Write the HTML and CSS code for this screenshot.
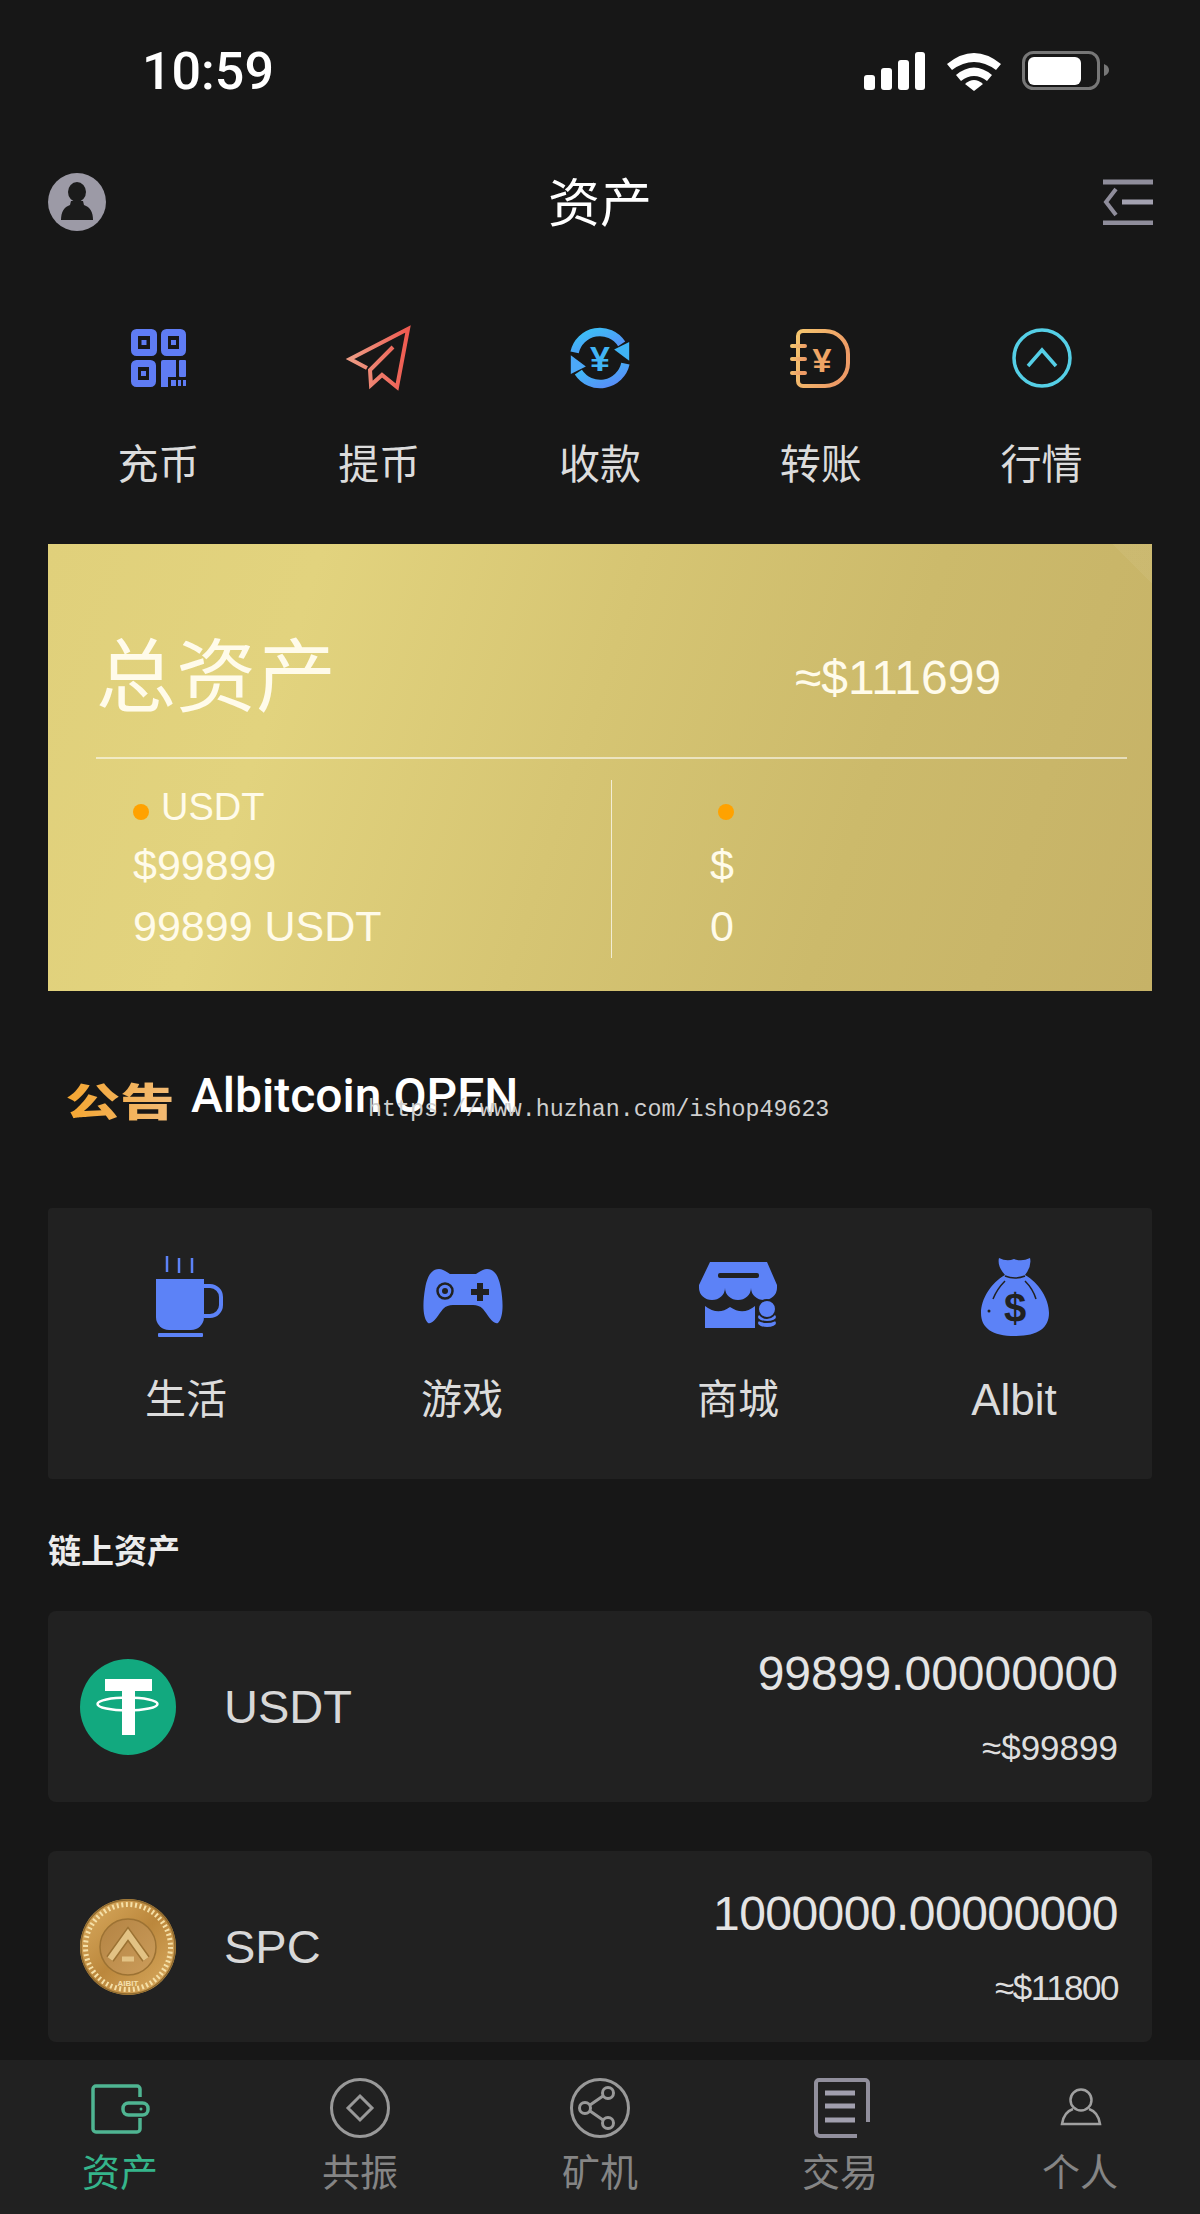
FILE: index.html
```html
<!DOCTYPE html>
<html lang="zh-CN">
<head>
  <meta charset="UTF-8" />
  <meta name="viewport" content="width=device-width, initial-scale=1" />
  <title>资产</title>
  <link rel="stylesheet" href="styles.css">
</head>
<body>

  <main class="page">
    <div class="status">
      <span class="status-time">10:59</span>
      <svg class="status-icons" width="245" height="40" viewBox="0 0 245 40">
        <rect x="0" y="24" width="11" height="15" rx="3" fill="#fff"/>
        <rect x="17" y="17" width="11" height="22" rx="3" fill="#fff"/>
        <rect x="34" y="9" width="11" height="30" rx="3" fill="#fff"/>
        <rect x="51" y="1" width="10" height="38" rx="3" fill="#fff"/>
        <path d="M83 13 Q110 -9 137 13 L132 19 Q110 3 88 19Z" fill="#fff"/>
        <path d="M92 24 Q110 9 128 24 L123 30 Q110 20 97 30Z" fill="#fff"/>
        <path d="M101 33 Q110 25 119 33 L110 40Z" fill="#fff"/>
        <rect x="159.500" y="1.500" width="75" height="36" rx="10" fill="none" stroke="#777" stroke-width="3"/>
        <rect x="164" y="6" width="53" height="28" rx="6" fill="#fff"/>
        <path d="M240 13 q5 2 5 6 q0 4 -5 6z" fill="#777"/>
      </svg>
    </div>

    <header class="nav">
      <svg width="58" height="58" viewBox="0 0 58 58">
        <defs><clipPath id="avatarClip"><circle cx="29" cy="29" r="29"/></clipPath></defs>
        <circle cx="29" cy="29" r="29" fill="#9c9aa6"/>
        <g clip-path="url(#avatarClip)" fill="#1b1b1b">
          <ellipse cx="29" cy="19" rx="9" ry="10"/>
          <path d="M23 28h12l1 4c6 2 9 7 9 15H13c0-8 3-13 9-15z"/>
        </g>
      </svg>
      <h1 class="nav-title">资产</h1>
      <svg class="nav-menu" width="50" height="46" viewBox="0 0 50 46">
        <path d="M0 3h50M0 44h50" stroke="#8f8d9b" stroke-width="5"/>
        <path d="M19 23h31" stroke="#a3a1b0" stroke-width="5"/>
        <path d="M13 10 3 23l10 13" fill="none" stroke="#8f8d9b" stroke-width="4"/>
      </svg>
    </header>

    <section class="actions">
      <div class="action">
        <svg width="64" height="64" viewBox="0 0 64 64">
          <g fill="none" stroke="#5f7cf4" stroke-width="7">
            <rect x="8.500" y="6.500" width="19" height="20" rx="2"/>
            <rect x="38.500" y="6.500" width="18" height="20" rx="2"/>
            <rect x="8.500" y="37.500" width="18" height="20" rx="2"/>
          </g>
          <g fill="#5f7cf4">
            <rect x="15.500" y="14" width="5" height="5"/>
            <rect x="45" y="14" width="5" height="5"/>
            <rect x="15" y="45" width="5" height="5"/>
            <path d="M35 36a2 2 0 0 1 2-2h13v17h-8v10h-7z"/>
            <rect x="53" y="34" width="7" height="17" rx="1"/>
            <rect x="45" y="54" width="5" height="6"/>
            <rect x="52" y="54" width="3" height="6"/>
            <rect x="57" y="54" width="3" height="6"/>
          </g>
        </svg>
        <span>充币</span>
      </div>
      <div class="action">
        <svg width="64" height="64" viewBox="0 0 64 64">
          <defs>
            <linearGradient id="planeGrad" x1="0" y1="0" x2="1" y2="0">
              <stop offset="0" stop-color="#ee9c85"/>
              <stop offset="1" stop-color="#ef5a50"/>
            </linearGradient>
          </defs>
          <path d="M46 21 23 44l1 15 11-10 15 12L61 3 3 33l17 9" fill="none" stroke="url(#planeGrad)" stroke-width="4"/>
        </svg>
        <span>提币</span>
      </div>
      <div class="action">
        <svg width="64" height="68" viewBox="0 0 64 68">
          <defs>
            <linearGradient id="cycleGrad" x1="0" y1="0" x2="1" y2="1">
              <stop offset="0" stop-color="#39c4f6"/>
              <stop offset="1" stop-color="#5b88f8"/>
            </linearGradient>
          </defs>
          <g fill="none" stroke="url(#cycleGrad)" stroke-width="9">
            <path d="M5 28A27.500 27.500 0 0 1 55 19"/>
            <path d="M59 40A27.500 27.500 0 0 1 9 49"/>
          </g>
          <path d="M47 25 63 17 63 37Z" fill="#3fb4f6"/>
          <path d="M17 43 1 51 1 31Z" fill="#4ca8f7"/>
          <text class="icon-yen" x="32" y="48" fill="#41b4f5" font-size="38">¥</text>
        </svg>
        <span>收款</span>
      </div>
      <div class="action">
        <svg width="64" height="64" viewBox="0 0 64 64">
          <defs>
            <linearGradient id="noteGrad" x1="0" y1="0" x2="1" y2="0.4">
              <stop offset="0" stop-color="#f4c56e"/>
              <stop offset="1" stop-color="#ee9b66"/>
            </linearGradient>
          </defs>
          <g fill="none" stroke="url(#noteGrad)" stroke-width="4" stroke-linecap="round">
            <path d="M9 15v-5a5 5 0 0 1 5-5h22a23 23 0 0 1 23 23v9a23 23 0 0 1-23 23H14a5 5 0 0 1-5-5z"/>
            <path d="M3 20h13M3 33h13M3 47h13"/>
          </g>
          <text class="icon-yen" x="33" y="46" fill="#f0a566" font-size="34">¥</text>
        </svg>
        <span>转账</span>
      </div>
      <div class="action">
        <svg width="64" height="64" viewBox="0 0 64 64">
          <circle cx="32" cy="32" r="28" fill="none" stroke="#55cfe6" stroke-width="3.500"/>
          <path d="M18 40 32 24l14 16" fill="none" stroke="#55cfe6" stroke-width="3.500"/>
        </svg>
        <span>行情</span>
      </div>
    </section>

    <section class="gold-card">
      <div class="gold-head">
        <div class="gold-title">总资产</div>
        <div class="gold-amount">≈$111699</div>
      </div>
      <div class="gold-cols">
        <div class="gold-col gold-col-left">
          <div class="gold-name"><i class="dot"></i>USDT</div>
          <div>$99899</div>
          <div>99899 USDT</div>
        </div>
        <div class="gold-col gold-col-right">
          <div class="gold-name"><i class="dot dot-solo"></i></div>
          <div>$</div>
          <div>0</div>
        </div>
      </div>
    </section>

    <section class="notice">
      <span class="notice-tag">公告</span>
      <span class="notice-text">Albitcoin OPEN</span>
      <span class="watermark">https://www.huzhan.com/ishop49623</span>
    </section>

    <section class="shortcuts">
      <div class="shortcut">
        <svg width="90" height="84" viewBox="0 0 90 84" fill="#5c82f7">
          <path d="M26 1v16M38 3v15M51 3v15" stroke="#5c82f7" stroke-width="2.500"/>
          <path d="M15 24h48v38a13 13 0 0 1-13 13H28a13 13 0 0 1-13-13z"/>
          <path d="M63 31h6a11 11 0 0 1 11 11v8a11 11 0 0 1-11 11h-6" fill="none" stroke="#5c82f7" stroke-width="4"/>
          <rect x="17" y="78" width="45" height="4" rx="1"/>
        </svg>
        <span>生活</span>
      </div>
      <div class="shortcut">
        <svg width="90" height="84" viewBox="0 0 90 84">
          <path d="M22 14c4 0 8 3 11 5h26c3-2 7-5 11-5c8 0 12 8 14 20c2 12 3 28-3 34c-5 2-10-8-15-14c-3-3-6-4-10-4H36c-4 0-7 1-10 4c-5 6-10 16-15 14c-6-6-5-22-3-34c2-12 6-20 14-20z" fill="#5c82f7"/>
          <circle cx="28" cy="36" r="7.500" fill="none" stroke="#212121" stroke-width="2.500"/>
          <circle cx="28" cy="36" r="3" fill="#212121"/>
          <path d="M63 28v18M54 37h18" stroke="#212121" stroke-width="6"/>
        </svg>
        <span>游戏</span>
      </div>
      <div class="shortcut">
        <svg width="90" height="84" viewBox="0 0 90 84">
          <path d="M17 7h57l10 23v3a13 12 0 0 1-26 0a13 12 0 0 1-26 0a13 12 0 0 1-26 0v-3z" fill="#5c82f7"/>
          <rect x="25" y="18" width="41" height="5" rx="2" fill="#212121"/>
          <path d="M12 51q13 10 25 1q13 9 25-1v22H12z" fill="#5c82f7"/>
          <g fill="#5c82f7" stroke="#212121" stroke-width="2">
            <ellipse cx="74" cy="68" rx="10" ry="5"/>
            <ellipse cx="74" cy="62" rx="10" ry="5"/>
            <circle cx="74" cy="54" r="9"/>
          </g>
        </svg>
        <span>商城</span>
      </div>
      <div class="shortcut">
        <svg width="90" height="84" viewBox="0 0 90 84">
          <path d="M30 3q8 4 15 1q8 3 16-1q2 8-5 17c14 8 24 24 24 38c0 15-11 23-34 23c-23 0-34-8-34-23c0-14 10-30 24-38q-8-9-6-17z" fill="#5c82f7"/>
          <path d="M36 21q10 4 20 0M36 26q-8 8-12 18M56 26q8 8 11 18" fill="none" stroke="#212121" stroke-width="1.500"/>
          <circle cx="20" cy="56" r="1.500" fill="#212121"/>
          <text class="icon-dollar" x="46" y="67" font-size="40" fill="#212121">$</text>
        </svg>
        <span class="shortcut-latin">Albit</span>
      </div>
    </section>

    <h2 class="section-title">链上资产</h2>

    <section class="assets">
      <div class="asset">
        <svg class="asset-icon" width="96" height="96" viewBox="0 0 96 96">
          <circle cx="48" cy="48" r="48" fill="#12a97f"/>
          <path d="M25 20h47v12H55v44H42V32H25z" fill="#fff"/>
          <ellipse cx="47.500" cy="45" rx="30" ry="6.500" fill="none" stroke="#fff" stroke-width="2.500"/>
        </svg>
        <span class="asset-name">USDT</span>
        <div class="asset-nums">
          <div class="asset-amount">99899.00000000</div>
          <div class="asset-usd">≈$99899</div>
        </div>
      </div>
      <div class="asset">
        <svg class="asset-icon" width="96" height="96" viewBox="0 0 96 96">
          <defs>
            <linearGradient id="coinGrad" x1="0" y1="0" x2="1" y2="1">
              <stop offset="0" stop-color="#dcae62"/>
              <stop offset="0.5" stop-color="#bb873c"/>
              <stop offset="1" stop-color="#dcae63"/>
            </linearGradient>
            <linearGradient id="coinInner" x1="0" y1="0" x2="1" y2="1">
              <stop offset="0" stop-color="#b38343"/>
              <stop offset="1" stop-color="#cc9d5b"/>
            </linearGradient>
          </defs>
          <circle cx="48" cy="48" r="48" fill="url(#coinGrad)"/>
          <circle cx="48" cy="48" r="47" fill="none" stroke="#8f6a2e" stroke-width="1.500"/>
          <circle cx="48" cy="48" r="42.500" fill="none" stroke="#f5e0a8" stroke-width="5" stroke-dasharray="2 2.600"/>
          <circle cx="48" cy="48" r="28" fill="url(#coinInner)" stroke="#9c7233" stroke-width="1.500"/>
          <path d="M30 60 48 35l18 25" fill="none" stroke="#9c7233" stroke-width="9"/>
          <path d="M30 60 48 35l18 25" fill="none" stroke="#e2c284" stroke-width="6"/>
          <path d="M42 60h12" stroke="#e2c284" stroke-width="5"/>
          <text class="coin-label" x="48" y="87" font-size="8" fill="#f5e0ae">AIBIT</text>
        </svg>
        <span class="asset-name">SPC</span>
        <div class="asset-nums asset-nums-narrow">
          <div class="asset-amount">1000000.00000000</div>
          <div class="asset-usd">≈$11800</div>
        </div>
      </div>
    </section>
  </main>

  <nav class="tabbar">
    <div class="tab tab-active">
      <svg width="64" height="64" viewBox="0 0 64 64">
        <g fill="none" stroke="#4fb592" stroke-width="3.500">
          <path d="M52 19v-8a3 3 0 0 0-3-3H8a3 3 0 0 0-3 3v40a3 3 0 0 0 3 3h41a3 3 0 0 0 3-3V40"/>
          <rect x="35" y="25" width="25" height="12" rx="5.500"/>
        </g>
        <circle cx="53" cy="31" r="1.500" fill="#4fb592"/>
      </svg>
      <span>资产</span>
    </div>
    <div class="tab">
      <svg width="64" height="64" viewBox="0 0 64 64">
        <circle cx="32" cy="30" r="28.500" fill="none" stroke="#999" stroke-width="3"/>
        <path d="M32 18 44 30 32 42 20 30Z" fill="none" stroke="#999" stroke-width="3"/>
      </svg>
      <span>共振</span>
    </div>
    <div class="tab">
      <svg width="64" height="64" viewBox="0 0 64 64">
        <g fill="none" stroke="#999" stroke-width="3">
          <circle cx="32" cy="30" r="28.500"/>
          <circle cx="17" cy="30" r="5.500"/>
          <circle cx="40" cy="15" r="5.500"/>
          <circle cx="40" cy="45" r="5.500"/>
          <path d="M22 27 35 18M22 33 35 42"/>
        </g>
      </svg>
      <span>矿机</span>
    </div>
    <div class="tab">
      <svg width="64" height="64" viewBox="0 0 64 64">
        <path d="M60 44V5a3 3 0 0 0-3-3H11a3 3 0 0 0-3 3v49a4 4 0 0 0 4 4h37" fill="none" stroke="#918f9c" stroke-width="4"/>
        <path d="M17 15h30M17 28h30M17 42h30" stroke="#a19fae" stroke-width="5"/>
      </svg>
      <span>交易</span>
    </div>
    <div class="tab">
      <svg width="64" height="64" viewBox="0 0 64 64">
        <circle cx="33" cy="22" r="10.500" fill="none" stroke="#a0a0a0" stroke-width="2.500"/>
        <path d="M25 31c-6 2-10 8-11 15h38c-1-7-5-13-11-15" fill="none" stroke="#a0a0a0" stroke-width="2.500"/>
      </svg>
      <span>个人</span>
    </div>
  </nav>

</body>
</html>
```

FILE: styles.css
```css
* {
  box-sizing: border-box;
}
body {
  margin: 0;
  height: 2214px;
  display: flex;
  flex-direction: column;
  overflow: hidden;
  background: #171717;
  color: #dedede;
  font-family: "Liberation Sans", "Noto Sans CJK SC", sans-serif;
}
svg {
  display: block;
  flex: none;
}
.page {
  flex: 1;
  padding: 0 48px;
  min-height: 0;
}

/* status bar */
.status {
  height: 142px;
  margin: 0 43px 0 94px;
  display: flex;
  align-items: center;
  justify-content: space-between;
}
.status-time {
  font-family: Roboto, sans-serif;
  font-size: 52px;
  font-weight: 500;
  color: #fff;
}

/* top nav */
.nav {
  height: 120px;
  display: grid;
  grid-template-columns: 1fr auto 1fr;
  align-items: center;
}
.nav-title {
  margin: 0 0 6px;
  font-size: 52px;
  font-weight: 400;
  color: #fff;
}
.nav-menu {
  justify-self: end;
  margin-right: -1px;
}

/* five round actions */
.actions {
  display: grid;
  grid-template-columns: repeat(5, 1fr);
  padding-top: 64px;
}
.action {
  display: flex;
  flex-direction: column;
  align-items: center;
}
.action svg {
  height: 64px;
  overflow: visible;
}
.action span {
  margin-top: 45px;
  font-size: 41px;
  line-height: 60px;
  color: #dcdcdc;
}
.icon-yen {
  font-family: "Liberation Sans", sans-serif;
  font-weight: 700;
  text-anchor: middle;
}
.icon-dollar {
  font-family: "Liberation Sans", sans-serif;
  font-weight: 700;
  text-anchor: middle;
}

/* gold card */
.gold-card {
  height: 447px;
  margin-top: 49px;
  color: #fffbea;
  background:
    linear-gradient(225deg, rgba(255,255,255,.05) 0 28px, rgba(255,255,255,0) 28px),
    linear-gradient(108deg, #e0d07b 0%, #e2d37e 22%, #d6c573 48%, #ccba6b 72%, #c6b267 100%);
}
.gold-head {
  height: 215px;
  margin: 0 25px 0 48px;
  display: flex;
  align-items: center;
  border-bottom: 2px solid rgba(255,255,255,.55);
}
.gold-title {
  width: 699px;
  padding-top: 54px;
  font-size: 80px;
  line-height: 90px;
}
.gold-amount {
  padding-top: 54px;
  font-size: 48px;
}
.gold-cols {
  display: flex;
  height: 178px;
  margin-top: 21px;
  font-size: 43px;
  line-height: 61px;
}
.gold-col-left {
  width: 564px;
  padding-left: 85px;
  border-right: 1px solid rgba(255,255,255,.7);
}
.gold-col-right {
  padding-left: 98px;
}
.gold-name {
  display: flex;
  align-items: center;
  height: 55px;
  font-size: 38px;
}
.dot {
  width: 16px;
  height: 16px;
  margin: 8px 12px 0 0;
  border-radius: 50%;
  background: #ffa200;
}
.dot-solo {
  margin-left: 8px;
}

/* notice line */
.notice {
  position: relative;
  height: 100px;
  margin-top: 54px;
  padding-left: 20px;
  display: flex;
  align-items: center;
}
.notice-tag {
  font-size: 52px;
  font-weight: 900;
  line-height: 100px;
  color: transparent;
  background: linear-gradient(90deg, #f5a630, #f1bb78);
  -webkit-background-clip: text;
  background-clip: text;
  transform: translateY(7px) scale(1.05, .75);
}
.notice-text {
  margin-left: 19px;
  font-family: Roboto, sans-serif;
  font-size: 48px;
  font-weight: 500;
  color: #fff;
}
.watermark {
  position: absolute;
  left: 320px;
  top: 51px;
  font-family: "Liberation Mono", monospace;
  font-size: 23.300px;
  line-height: 28px;
  color: #cfcfcf;
  white-space: nowrap;
}

/* shortcut panel */
.shortcuts {
  height: 271px;
  margin-top: 63px;
  padding-top: 47px;
  display: grid;
  grid-template-columns: repeat(4, 1fr);
  background: #212121;
  border-radius: 4px;
}
.shortcut {
  display: flex;
  flex-direction: column;
  align-items: center;
}
.shortcut span {
  margin-top: 31px;
  font-size: 41px;
  line-height: 60px;
  color: #dcdcdc;
}
.shortcut .shortcut-latin {
  font-size: 44px;
}

/* asset list */
.section-title {
  margin: 53px 0 39px;
  font-size: 33px;
  line-height: 40px;
  font-weight: 700;
  color: #ececec;
}
.assets {
  display: flex;
  flex-direction: column;
  gap: 49px;
}
.asset {
  height: 191px;
  padding: 0 34px 0 32px;
  display: flex;
  align-items: center;
  background: #212121;
  border-radius: 8px;
}
.asset-name {
  margin-left: 48px;
  font-size: 47px;
  color: #d8d8d8;
}
.asset-nums {
  margin-left: auto;
  text-align: right;
}
.asset-amount {
  font-size: 48px;
  line-height: 60px;
  color: #e4e4e4;
}
.asset-usd {
  margin-top: 22px;
  font-size: 35px;
  line-height: 44px;
  color: #dedede;
}
.asset-nums-narrow .asset-amount {
  letter-spacing: -.55px;
}
.asset-nums-narrow .asset-usd {
  letter-spacing: -1.500px;
}
.coin-label {
  font-family: "Liberation Sans", sans-serif;
  font-weight: 700;
  text-anchor: middle;
}

/* bottom tabs */
.tabbar {
  flex: none;
  height: 154px;
  padding-top: 18px;
  display: grid;
  grid-template-columns: repeat(5, 1fr);
  background: #212121;
}
.tab {
  display: flex;
  flex-direction: column;
  align-items: center;
  color: #858585;
}
.tab svg {
  overflow: visible;
}
.tab span {
  margin-top: 6px;
  font-size: 38px;
  line-height: 50px;
}
.tab-active {
  color: #35b58b;
}
```
